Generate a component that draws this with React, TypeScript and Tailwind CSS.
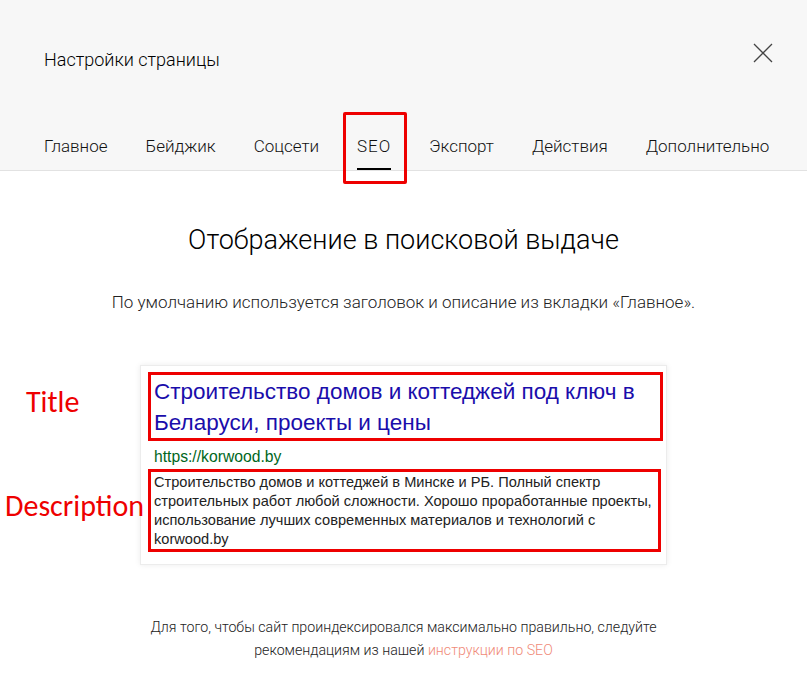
import React from "react";

const tabs = ["Главное", "Бейджик", "Соцсети", "SEO", "Экспорт", "Действия", "Дополнительно"];

export default function App() {
  const futura = { fontFamily: "Roboto, 'Noto Sans', sans-serif" };
  return (
    <div className="w-[807px] h-[685px] bg-white overflow-hidden relative text-black" style={futura}>
      {/* Header */}
      <div className="bg-[#f7f7f7] h-[171px] border-b border-[#e2e2e2] relative">
        <div className="flex items-start justify-between pl-[44px] pr-[34px] pt-[49px]">
          <div className="text-[18px] font-light leading-[22px]">Настройки страницы</div>
          <svg width="20" height="20" viewBox="0 0 20 20" className="mt-[-6px]">
            <path d="M1 1 L19 19 M19 1 L1 19" stroke="#444" strokeWidth="1.3" fill="none" />
          </svg>
        </div>
        <div className="flex gap-[38px] pl-[44px] mt-[64px]">
          {tabs.map((t) => (
            <div key={t} className="relative flex flex-col items-center">
              <div className={"text-[17px] font-light leading-[22px] text-[#111] " + (t === "SEO" ? "tracking-[1px]" : "tracking-normal")}>{t}</div>
              {t === "SEO" && <div className="w-full h-[2px] bg-black mt-[11px]" />}
              {t === "SEO" && (
                <div className="absolute left-[-14px] right-[-16px] top-[-23px] h-[72px] border-[3px] border-[#ee0000] rounded-[2px]" />
              )}
            </div>
          ))}
        </div>
      </div>

      {/* Body */}
      <div className="flex flex-col items-center">
        <div className="mt-[51px] text-[27px] font-light leading-[36px]">Отображение в поисковой выдаче</div>
        <div className="mt-[33px] text-[17px] font-light leading-[22px] text-[#222]">
          По умолчанию используется заголовок и описание из вкладки «Главное».
        </div>

        <div className="relative mt-[52px] w-[527px] bg-white shadow-[0_0_6px_rgba(0,0,0,0.08)] border border-[#ececec] pl-[7px] pr-[3px] pt-[6px] pb-[12px]" style={{ fontFamily: "Arial, 'Liberation Sans', sans-serif" }}>
          <div className="border-[3px] border-[#ee0000] pl-[3px] pt-[1px] text-[22.5px] leading-[31px] text-[#1a0dab]">
            Строительство домов и коттеджей под ключ в Беларуси, проекты и цены
          </div>
          <div className="pl-[6px] pt-[6px] pb-[2px] text-[15.7px] leading-[20px] text-[#006621]">https://korwood.by</div>
          <div className="mr-[2px] border-[3px] border-[#ee0000] pl-[3px] pt-[1px] text-[14.6px] leading-[19px] text-[#222]">
            Строительство домов и коттеджей в Минске и РБ. Полный спектр строительных работ любой сложности. Хорошо проработанные проекты, использование лучших современных материалов и технологий с korwood.by
          </div>
          <div className="absolute left-[-115px] top-[18px] text-[30px] leading-[36px] text-[#ee0000]" style={{ fontFamily: "Carlito, 'Open Sans', sans-serif" }}>Title</div>
          <div className="absolute left-[-136px] top-[122px] text-[30px] leading-[36px] text-[#ee0000]" style={{ fontFamily: "Carlito, 'Open Sans', sans-serif" }}>Description</div>
        </div>

        <div className="mt-[51px] text-[14.2px] font-light leading-[23px] text-center text-[#222] w-[530px]">
          Для того, чтобы сайт проиндексировался максимально правильно, следуйте рекомендациям из нашей <span className="text-[#f08a78]">инструкции по SEO</span>
        </div>
      </div>
    </div>
  );
}
